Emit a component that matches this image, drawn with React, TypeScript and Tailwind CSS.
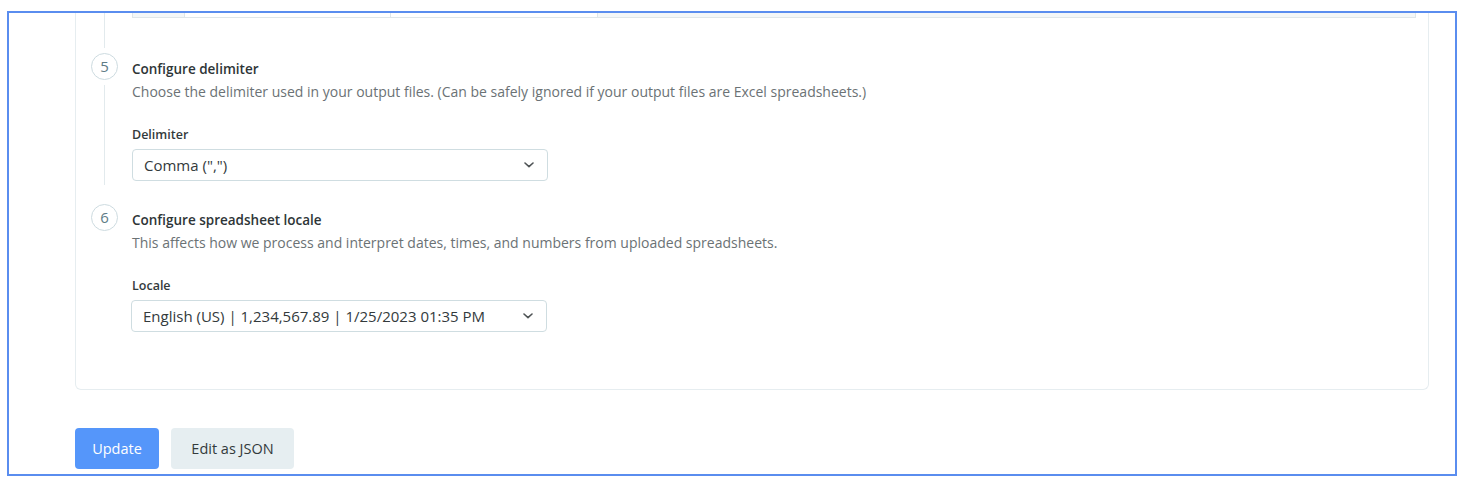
import type { ReactNode } from "react";

type StepProps = {
  number: number;
  title: string;
  description: string;
  last?: boolean;
  className?: string;
  children: ReactNode;
};

function Chevron() {
  return (
    <svg width="10" height="6" viewBox="0 0 10 6" fill="none" className="shrink-0">
      <path
        d="M1 1l4 3.6L9 1"
        stroke="#4f5456"
        strokeWidth="1.6"
        strokeLinecap="round"
        strokeLinejoin="round"
      />
    </svg>
  );
}

function Select({ value }: { value: string }) {
  return (
    <div className="flex h-[32px] w-[416px] items-center justify-between rounded-[4px] border border-[#cfdde1] bg-white pl-[11px] pr-[13px]">
      <span className="text-[15px] leading-5 text-[#333a3c]">{value}</span>
      <Chevron />
    </div>
  );
}

function Step({ number, title, description, last, className, children }: StepProps) {
  return (
    <div className={`flex ${className ?? ""}`}>
      <div className="flex w-[27px] shrink-0 flex-col items-center pt-[5px]">
        <div className="grid size-[27px] place-items-center rounded-full border border-[#cddbe0] text-[15px] leading-none text-[#5e7c86]">
          {number}
        </div>
        {!last && <div className="mt-[5px] w-px flex-1 bg-[#e2eaed]" />}
      </div>
      <div className="min-w-0 flex-1 pl-[14px] pt-[11px]">
        <h3 className="text-[13.5px] font-semibold leading-5 text-[#2e3537]">{title}</h3>
        <p className="mt-[3px] text-[14px] leading-5 text-[#6b7275]">{description}</p>
        {children}
      </div>
    </div>
  );
}

export default function App() {
  return (
    <div className="h-[486px] w-[1474px] overflow-hidden bg-white font-['Open_Sans',sans-serif]">
      <div className="ml-[7px] mt-[11px] flex h-[465px] w-[1450px] flex-col overflow-hidden border-2 border-[#5a8def] pl-[66px] pr-[26px]">
        <section className="rounded-b-[6px] border border-t-0 border-[#e6edf0] pb-[57px] pl-[15px] pr-[12px]">
          <div className="flex">
            <div className="flex w-[27px] shrink-0 justify-center">
              <div className="w-px bg-[#e2eaed]" />
            </div>
            <div className="flex-1 pl-[14px]">
              <div className="flex h-[5px] border-b border-l border-r border-[#dfe6e9]">
                <div className="w-[51px] bg-[#f4f7f8]" />
                <div className="w-[206px] border-l border-[#dfe6e9]" />
                <div className="w-[207px] border-l border-[#dfe6e9]" />
                <div className="flex-1 border-l border-[#dfe6e9] bg-[#f4f7f8]" />
              </div>
              <div className="h-[30px]" />
            </div>
          </div>

          <Step
            number={5}
            title="Configure delimiter"
            description="Choose the delimiter used in your output files. (Can be safely ignored if your output files are Excel spreadsheets.)"
          >
            <label className="mt-[23px] block text-[12.5px] font-semibold leading-5 text-[#333a3c]">
              Delimiter
            </label>
            <div className="mt-[4px] pb-[4px]">
              <Select value={'Comma (",")'} />
            </div>
          </Step>

          <Step
            number={6}
            last
            className="mt-[14px]"
            title="Configure spreadsheet locale"
            description="This affects how we process and interpret dates, times, and numbers from uploaded spreadsheets."
          >
            <label className="mt-[23px] block text-[12.5px] font-semibold leading-5 text-[#333a3c]">
              Locale
            </label>
            <div className="mt-[4px] -ml-px">
              <Select value="English (US) | 1,234,567.89 | 1/25/2023 01:35 PM" />
            </div>
          </Step>
        </section>

        <div className="mt-[38px] flex gap-[12px]">
          <button className="h-[41px] w-[84px] rounded-[4px] bg-[#5596fa] text-[14.5px] text-white">
            Update
          </button>
          <button className="h-[41px] w-[123px] rounded-[4px] bg-[#e6eef1] text-[14.5px] text-[#333a3c]">
            Edit as JSON
          </button>
        </div>
      </div>
    </div>
  );
}
